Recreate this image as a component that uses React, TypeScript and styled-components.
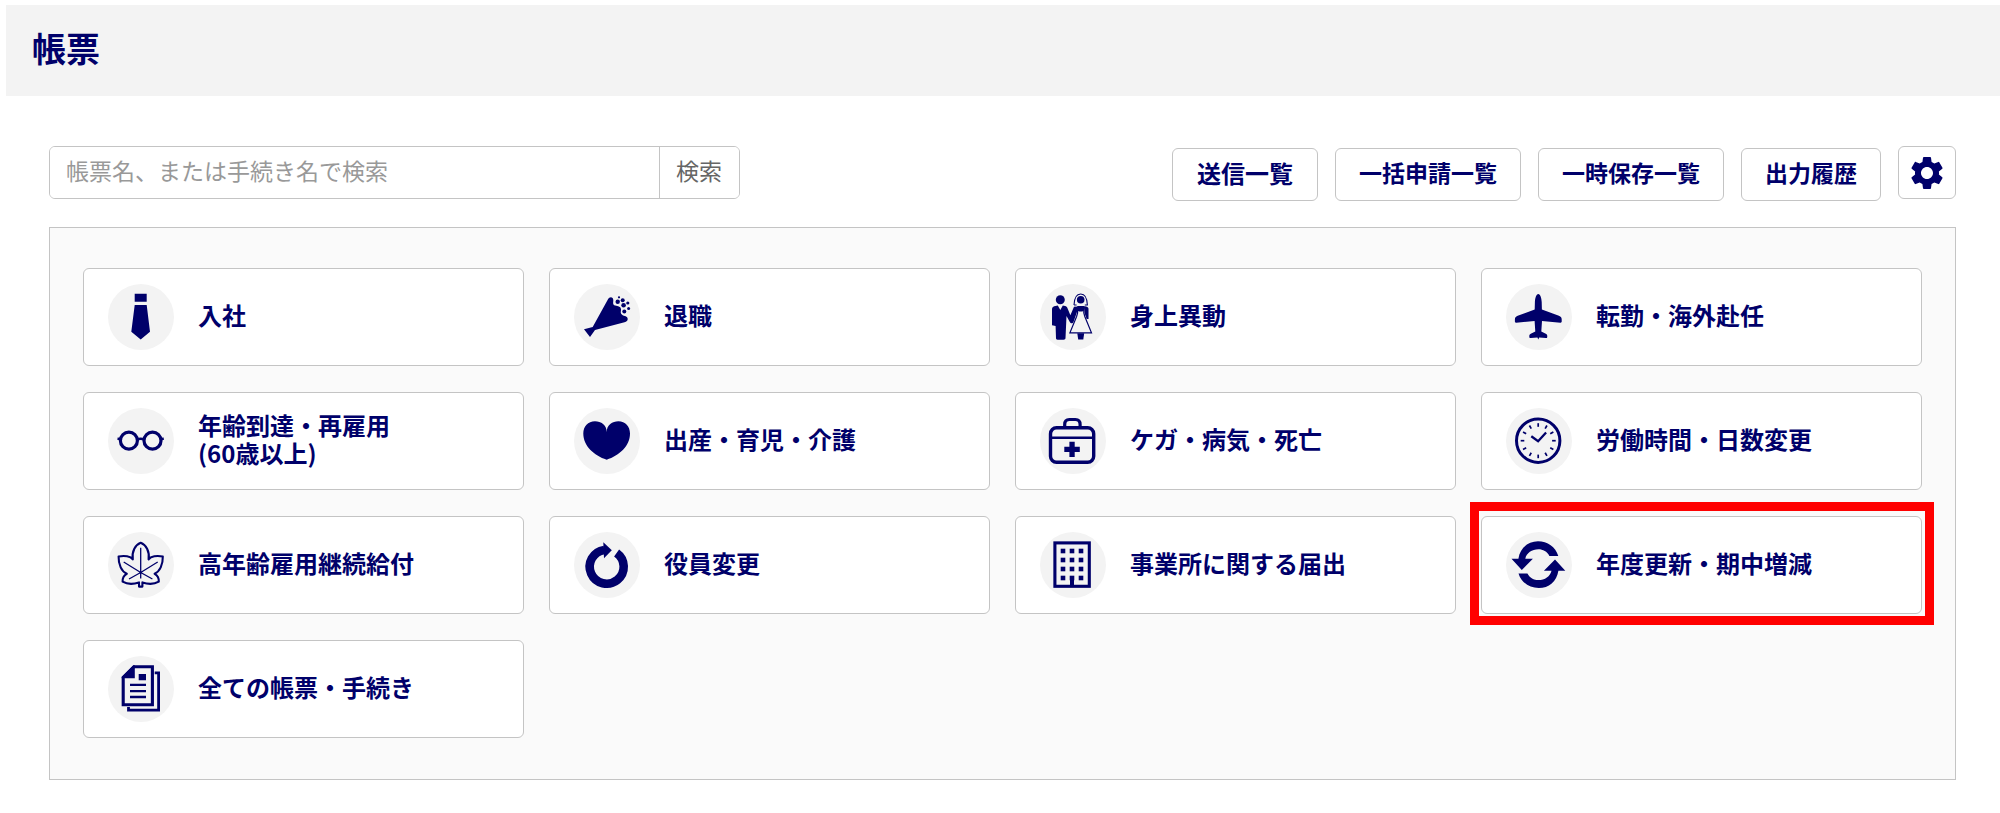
import React from 'react';
import styled, { createGlobalStyle } from 'styled-components';
import { MdSettings } from 'react-icons/md';

const navy = '#00006a';
const line = '#c4c4c4';

const GlobalStyle = createGlobalStyle`
  *, *::before, *::after { box-sizing: border-box; }
  body {
    margin: 0;
    background: #fff;
    color: ${navy};
    font-family: "Noto Sans CJK JP", sans-serif;
  }
  button, input { font-family: inherit; margin: 0; }
`;

const Page = styled.div`
  padding: 5px 0 32px 6px;
`;

const Header = styled.header`
  padding: 19px 26px 24px;
  background: #f3f3f3;
`;

const Title = styled.h1`
  margin: 0;
  font-size: 34px;
  line-height: 48px;
  font-weight: 700;
`;

const Main = styled.main`
  padding: 50px 44px 0 43px;
`;

const Toolbar = styled.div`
  display: flex;
  justify-content: space-between;
  align-items: flex-start;
  gap: 24px;
  margin-bottom: 26px;
`;

const SearchForm = styled.form`
  display: flex;
  flex: 0 1 691px;
  min-width: 0;
  height: 53px;
  border: 1px solid ${line};
  border-radius: 6px;
  overflow: hidden;
`;

const SearchInput = styled.input`
  flex: 1;
  min-width: 0;
  padding: 0 16px 5px;
  border: 0;
  background: #fff;
  color: #555;
  font-size: 23px;
  &::placeholder { color: #999; opacity: 1; }
`;

const SearchButton = styled.button`
  flex: none;
  padding: 0 17px 5px 16px;
  border: 0;
  border-left: 1px solid ${line};
  background: #fff;
  color: #666;
  font-size: 23px;
`;

const Actions = styled.div`
  display: flex;
  align-items: flex-start;
  gap: 17px;
`;

const TextActions = styled.div`
  display: flex;
  gap: 17px;
  padding-top: 2px;
`;

const ActionButton = styled.button<{ $large?: boolean }>`
  height: 53px;
  padding: 0 ${p => (p.$large ? 24 : 23)}px 5px;
  border: 1px solid ${line};
  border-radius: 6px;
  background: #fff;
  color: ${navy};
  font-size: ${p => (p.$large ? 24 : 23)}px;
  font-weight: 700;
  white-space: nowrap;
`;

const IconButton = styled.button`
  display: flex;
  align-items: center;
  justify-content: center;
  width: 58px;
  height: 53px;
  padding: 0;
  border: 1px solid ${line};
  border-radius: 6px;
  background: #fff;
  color: ${navy};
`;

const Panel = styled.nav`
  padding: 40px 33px 41px;
  border: 1px solid ${line};
  background: #fafafa;
`;

const Grid = styled.ul`
  display: grid;
  grid-template-columns: repeat(4, minmax(0, 1fr));
  gap: 26px 25px;
  margin: 0;
  padding: 0;
  list-style: none;
`;

const Card = styled.a<{ $marked?: boolean }>`
  position: relative;
  display: flex;
  align-items: center;
  gap: 24px;
  min-height: 98px;
  padding: 0 24px;
  border: 1px solid ${line};
  border-radius: 6px;
  background: #fff;
  color: ${navy};
  text-decoration: none;

  ${p => p.$marked && `
    &::after {
      content: "";
      position: absolute;
      inset: -15px -13px -12px -12px;
      border: 9px solid #f00;
      pointer-events: none;
    }
  `}
`;

const Badge = styled.span`
  flex: none;
  width: 66px;
  height: 66px;
  border-radius: 50%;
  background: #f3f3f3;

  svg { display: block; overflow: visible; }
`;

const Label = styled.span`
  padding-bottom: 4px;
  font-size: 24px;
  line-height: 28px;
  font-weight: 700;
  white-space: pre-line;
`;

const stroke = { fill: 'none', stroke: 'currentColor' } as const;

const Tie = () => (
  <path d="M26.7 9.7h12v8h-12zM26.7 21h12L42 47.7l-9.3 7.8-9.4-7.8z" />
);

const Cracker = () => (
  <>
    <path d="M10 45.3 18.7 43 34 15.3C35.2 12.6 39.3 12.4 39.3 16.2 39.3 18.6 38.4 20.5 41.2 21.6 44 22.6 47 22.3 47 25.6 47 28 46 29.4 48.4 31 50.2 32.2 53.6 32 53.7 35 53.7 36.8 52.6 37.6 50.5 38.2L21 46 16 53z" />
    <circle cx="45" cy="13.3" r="1.1" />
    <circle cx="48.7" cy="16.2" r="2" />
    <circle cx="43.7" cy="17.8" r="2.2" />
    <circle cx="53.8" cy="19" r="1.6" />
    <circle cx="49.6" cy="21.2" r="2.3" />
    <circle cx="54.6" cy="24.5" r="1.5" />
    <circle cx="50.3" cy="27.4" r="2" />
  </>
);

const Couple = () => (
  <>
    <circle cx="20.3" cy="15.7" r="4.5" />
    <path d="M15.500 22 17.800 21.500l2.500 4.500 2.500-4.500 2.300.5c1.200.3 1.900.9 2.300 2l3 7.200 3.600-8.500L38 22.500l-.5 4-3.900 11.200c-.7 2-2.900 2-3.800.2L26.500 32l-1 22c0 1.200-.7 1.700-1.900 1.700h-6c-1.200 0-1.600-.5-1.600-1.700L15.600 42l-3.600-.8V25c0-1.900 1.500-2.700 3.500-3z" />
    <circle cx="40.7" cy="15.7" r="3.8" />
    <path d="M34 21c.3-6.800 1.800-11 6.700-11s6.400 4.200 6.700 11h-2.600M34 21h2.600" {...stroke} strokeWidth="1.1" />
    <path d="M37.300 22h6.800v3.200c0 1.800-1 2.400-3.400 2.400s-3.400-.6-3.400-2.400zM44 22l3 .8c1 .4 1.500 1.200 1.500 2.400v9.800h-1.800L44.500 29z" />
    <path d="M37.600 23.500v5.500l-1 3.500-6.700 16.300h21.600L44.800 32.500 43.800 29v-5.500" {...stroke} strokeWidth="1.200" />
    <path d="M37.300 49.300h6.900l-.9 6.300h-5.100z" />
  </>
);

const Plane = () => (
  <path d="M32.300 10c2 0 3.200 4 3.400 8l.2 7.500 17 6.200c2.100.8 2.800 1.800 2.800 3.700v2.200c0 .8-.5 1.200-1.300 1.100L36 36.900l-.7 10.600 4.500 2.200c1.200.6 1.500 1.300 1.500 2.600 0 1.500-.3 1.900-1.500 1.800l-6.600-.7-.9 2.100-.9-2.100-6.600.7c-1.200.1-1.500-.3-1.500-1.800 0-1.300.3-2 1.500-2.600l4.500-2.200-.7-10.600-18.400 1.800c-.8.1-1.300-.3-1.300-1.100v-2.200c0-1.900.7-2.900 2.800-3.700l17-6.200.2-7.500c.2-4 1.400-8 3.400-8z" />
);

const Glasses = () => (
  <g {...stroke} strokeWidth="3.200">
    <circle cx="20.900" cy="32.700" r="8.500" />
    <circle cx="44.500" cy="32.700" r="8.500" />
    <path d="M29 31.500q3.650-1.600 7.300 0M12.500 31l-3-.3M52.800 31l3-.3" strokeWidth="2.600" />
  </g>
);

const Heart = () => (
  <path d="M32.700 24C32.700 17 27 13.300 21 13.300 14 13.300 9.300 18.500 9.300 25.500 9.300 38 20 47.500 32.700 51.700 45.400 47.500 56 38 56 25.500 56 18.500 51.300 13.300 44.400 13.300 38.400 13.300 32.700 17 32.700 24z" />
);

const MedicalBag = () => (
  <>
    <g {...stroke}>
      <rect x="10.500" y="19.800" width="43.200" height="34.400" rx="6" strokeWidth="3.400" />
      <path d="M24.700 19v-2.500c0-3 1.700-5 4.700-5h6c3 0 4.700 2 4.700 5V19" strokeWidth="3.200" />
      <path d="M10 29.700h44" strokeWidth="2.400" />
    </g>
    <path d="M29.400 33.700h5.300v5.100h5.100v5.200h-5.100v5.100h-5.300V44h-5.100v-5.200h5.100z" />
  </>
);

const Clock = () => (
  <g {...stroke}>
    <circle cx="32.200" cy="32.700" r="21.700" strokeWidth="3" />
    {Array.from({ length: 12 }, (_, i) => (
      <path key={i} d="M32.200 15.200v3.600" strokeWidth="1.700" transform={`rotate(${i * 30} 32.200 32.700)`} />
    ))}
    <path d="M25.300 28.200l6.800 5 8-8.700" strokeWidth="2.300" />
  </g>
);

const Leaf = () => (
  <g {...stroke} strokeLinejoin="round">
    <path
      d="M32.700 10.700C27.500 12.600 23.500 19.500 24.800 27.500 22.600 24.300 16.500 23.200 10.600 24.600 10.400 32.600 13.600 39.600 18.800 41.800 16.200 43.200 14.400 45.800 14.600 49.600 19.400 52.400 25.700 52.200 31 50.400V54.600H34.400V50.400C39.700 52.200 46 52.400 50.800 49.600 51 45.800 49.200 43.200 46.600 41.800 51.800 39.600 55 32.600 54.800 24.600 48.900 23.200 42.800 24.300 40.600 27.500 41.900 19.500 37.900 12.600 32.700 10.700z"
      strokeWidth="2.100"
    />
    <path d="M32.700 15.700v30.800M15.700 30l17 10.500 17-10.500M21 47l11.700-6.500L44.400 47" strokeWidth="1.300" />
  </g>
);

const Rotate = () => (
  <>
    <path d="M42.600 20.900A17 17 0 1 1 30.300 17.900" {...stroke} strokeWidth="8.600" />
    <path d="M29.300 10.200l8.500 8.100-7.800 7.900z" />
  </>
);

const Building = () => (
  <>
    <rect x="14.900" y="10.900" width="34.400" height="43.400" {...stroke} strokeWidth="3.100" />
    {[19, 28, 37, 46].map(y =>
      [23, 32, 41].map(x => <rect key={`${x}-${y}`} x={x - 2.3} y={y - 2.3} width="4.600" height="4.600" />)
    )}
    <path d="M30 44h4v11h-4z" />
  </>
);

const Sync = () => (
  <>
    {[0, 180].map(angle => (
      <path
        key={angle}
        transform={`rotate(${angle} 32.400 32.700)`}
        d="M12.400 26.700C14 16 22 9.300 32 9.300 41.500 9.300 49.500 15 52.300 24H43.400C41 19.500 37 17.300 32.400 17.300 26 17.300 20.500 21 19.300 26.700H26.900L15.800 38 5.500 26.700z"
      />
    ))}
  </>
);

const Documents = () => (
  <>
    <g {...stroke}>
      <path d="M26 10.700h18.400v38H15.200V21.500z" strokeWidth="3.100" />
      <path d="M46.700 16.800h3.900v37.300H20.500v-3" strokeWidth="2.800" />
      <path d="M22 28.800h16M22 35.200h16M22 41h16" strokeWidth="2.300" />
    </g>
    <path d="M25.300 9.300h1.500v13H13.700v-1.200zM30.700 18H38v6.300h-7.300z" />
  </>
);

type Category = { label: string; Icon: () => React.ReactElement; marked?: boolean };

const categories: Category[] = [
  { label: '入社', Icon: Tie },
  { label: '退職', Icon: Cracker },
  { label: '身上異動', Icon: Couple },
  { label: '転勤・海外赴任', Icon: Plane },
  { label: '年齢到達・再雇用\n(60歳以上)', Icon: Glasses },
  { label: '出産・育児・介護', Icon: Heart },
  { label: 'ケガ・病気・死亡', Icon: MedicalBag },
  { label: '労働時間・日数変更', Icon: Clock },
  { label: '高年齢雇用継続給付', Icon: Leaf },
  { label: '役員変更', Icon: Rotate },
  { label: '事業所に関する届出', Icon: Building },
  { label: '年度更新・期中増減', Icon: Sync, marked: true },
  { label: '全ての帳票・手続き', Icon: Documents },
];

export default function App() {
  return (
    <Page lang="ja">
      <GlobalStyle />
      <Header>
        <Title>帳票</Title>
      </Header>
      <Main>
        <Toolbar>
          <SearchForm role="search" onSubmit={e => e.preventDefault()}>
            <SearchInput
              type="text"
              aria-label="帳票名、または手続き名で検索"
              placeholder="帳票名、または手続き名で検索"
            />
            <SearchButton type="submit">検索</SearchButton>
          </SearchForm>
          <Actions>
            <TextActions>
              <ActionButton type="button" $large>送信一覧</ActionButton>
              <ActionButton type="button">一括申請一覧</ActionButton>
              <ActionButton type="button">一時保存一覧</ActionButton>
              <ActionButton type="button">出力履歴</ActionButton>
            </TextActions>
            <IconButton type="button" aria-label="設定">
              <MdSettings size={40} />
            </IconButton>
          </Actions>
        </Toolbar>
        <Panel aria-label="帳票">
          <Grid>
            {categories.map(({ label, Icon, marked }) => (
              <li key={label}>
                <Card href="#" $marked={marked}>
                  <Badge>
                    <svg width="66" height="66" viewBox="0 0 66 66" fill="currentColor" aria-hidden="true">
                      <Icon />
                    </svg>
                  </Badge>
                  <Label>{label}</Label>
                </Card>
              </li>
            ))}
          </Grid>
        </Panel>
      </Main>
    </Page>
  );
}
